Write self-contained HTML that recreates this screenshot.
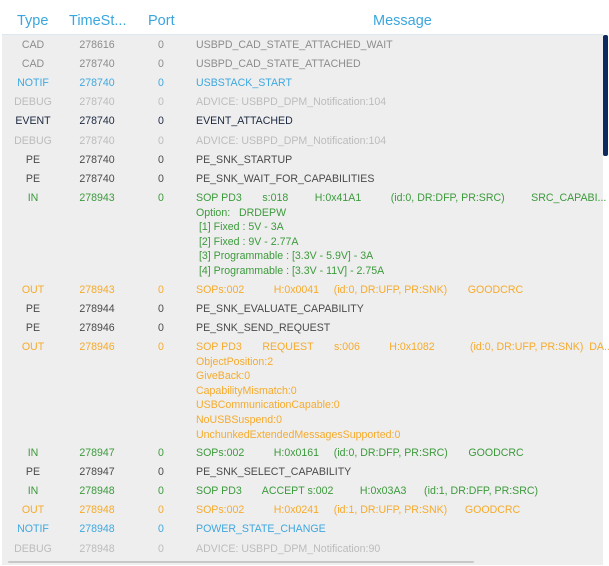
<!DOCTYPE html><html><head><style>
body{margin:0;width:609px;height:566px;background:#fff;font-family:"Liberation Sans",sans-serif;position:relative;overflow:hidden}
.h{position:absolute;top:13px;font-size:14.5px;color:#3aa6de}
.bg{position:absolute;left:2px;top:34px;width:601px;height:530px;background:#eeeeee;border-top:1px solid #dde8f3}
.l{position:absolute;font-size:10.6px;line-height:14px;white-space:pre}
.t{width:64px;left:1px;text-align:center}.s{width:64px;left:65px;text-align:center}.p{width:20px;left:151px;text-align:center}.m{left:196px}
.g{color:#8c8c8c}.b{color:#3ea8df}.d{color:#bcbcbc}.e{color:#1c2840}.k{color:#4a4a4a}.n{color:#3c9a3c}.o{color:#f6ab2c}
</style></head><body>
<div class="h" style="left:17px">Type</div><div class="h" style="left:69px">TimeSt...</div><div class="h" style="left:148px">Port</div><div class="h" style="left:373px">Message</div>
<div class="bg"></div>
<div style="position:absolute;left:603px;top:35px;width:5px;height:121px;background:#0e2a5e;border-radius:2px"></div>
<div style="position:absolute;left:8px;top:561px;width:466px;height:2px;background:#c8c8c8;border-radius:1px"></div>
<div id="r"></div>
<script>
const R=[
[37,'g','CAD','278616',['USBPD_CAD_STATE_ATTACHED_WAIT']],
[56,'g','CAD','278740',['USBPD_CAD_STATE_ATTACHED']],
[75,'b','NOTIF','278740',['USBSTACK_START']],
[94,'d','DEBUG','278740',['ADVICE: USBPD_DPM_Notification:104']],
[113,'e','EVENT','278740',['EVENT_ATTACHED']],
[133,'d','DEBUG','278740',['ADVICE: USBPD_DPM_Notification:104']],
[152,'k','PE','278740',['PE_SNK_STARTUP']],
[171,'k','PE','278740',['PE_SNK_WAIT_FOR_CAPABILITIES']],
[190,'n','IN','278943',['SOP PD3       s:018         H:0x41A1          (id:0, DR:DFP, PR:SRC)         SRC_CAPABI...','Option:   DRDEPW',' [1] Fixed : 5V - 3A',' [2] Fixed : 9V - 2.77A',' [3] Programmable : [3.3V - 5.9V] - 3A',' [4] Programmable : [3.3V - 11V] - 2.75A']],
[282,'o','OUT','278943',['SOPs:002          H:0x0041     (id:0, DR:UFP, PR:SNK)       GOODCRC']],
[301,'k','PE','278944',['PE_SNK_EVALUATE_CAPABILITY']],
[320,'k','PE','278946',['PE_SNK_SEND_REQUEST']],
[339,'o','OUT','278946',['SOP PD3       REQUEST       s:006          H:0x1082            (id:0, DR:UFP, PR:SNK)  DA...','ObjectPosition:2','GiveBack:0','CapabilityMismatch:0','USBCommunicationCapable:0','NoUSBSuspend:0','UnchunkedExtendedMessagesSupported:0']],
[445,'n','IN','278947',['SOPs:002          H:0x0161     (id:0, DR:DFP, PR:SRC)       GOODCRC']],
[464,'k','PE','278947',['PE_SNK_SELECT_CAPABILITY']],
[483,'n','IN','278948',['SOP PD3       ACCEPT s:002         H:0x03A3      (id:1, DR:DFP, PR:SRC)']],
[502,'o','OUT','278948',['SOPs:002          H:0x0241     (id:1, DR:UFP, PR:SNK)      GOODCRC']],
[521,'b','NOTIF','278948',['POWER_STATE_CHANGE']],
[541,'d','DEBUG','278948',['ADVICE: USBPD_DPM_Notification:90']]];
let h='';
for(const[y0,c,t,s,m]of R){const y=y0+1;
h+=`<div class="l t ${c}" style="top:${y}px">${t}</div><div class="l s ${c}" style="top:${y}px">${s}</div><div class="l p ${c}" style="top:${y}px">0</div>`;
m.forEach((x,i)=>{h+=`<div class="l m ${c}" style="top:${y+i*14.6}px">${x}</div>`});
}
document.getElementById('r').innerHTML=h;
</script>
</body></html>
